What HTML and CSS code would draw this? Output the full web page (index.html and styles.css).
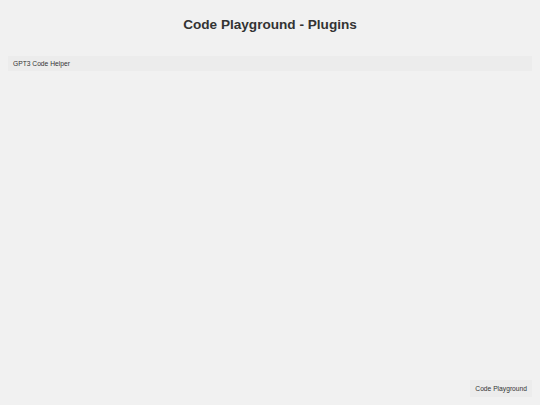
FILE: index.html
```html
<!DOCTYPE html>
<html lang="en">
<head>
<meta charset="utf-8">
<title>Code Playground - Plugins</title>
<link rel="stylesheet" href="styles.css">
</head>
<body>
<div class="page">
  <h1 class="title">Code Playground - Plugins</h1>
  <ul class="plugins">
    <li class="plugin">GPT3 Code Helper</li>
  </ul>
  <div class="spacer"></div>
  <footer class="footer">
    <span class="footer-link">Code Playground</span>
  </footer>
</div>
</body>
</html>
```

FILE: styles.css
```css
html, body {
  margin: 0;
  padding: 0;
  height: 100%;
  background: #f1f1f1;
}
body {
  font-family: "Liberation Sans", Arial, sans-serif;
  color: #333;
}
.page {
  display: flex;
  flex-direction: column;
  height: 100%;
  box-sizing: border-box;
  padding: 0 8px 8px;
}
.title {
  margin: 16px 0 0;
  font-size: 13.6px;
  line-height: 18px;
  font-weight: bold;
  text-align: center;
  color: #333;
}
.plugins {
  list-style: none;
  margin: 22px 0 0;
  padding: 0;
}
.plugin {
  background: #ececec;
  font-size: 6.7px;
  line-height: 15px;
  padding: 0 5px;
  color: #333;
}
.spacer {
  flex: 1;
}
.footer {
  display: flex;
  justify-content: flex-end;
}
.footer-link {
  background: #ececec;
  font-size: 6.7px;
  line-height: 17px;
  padding: 0 5px;
  color: #333;
}
```
